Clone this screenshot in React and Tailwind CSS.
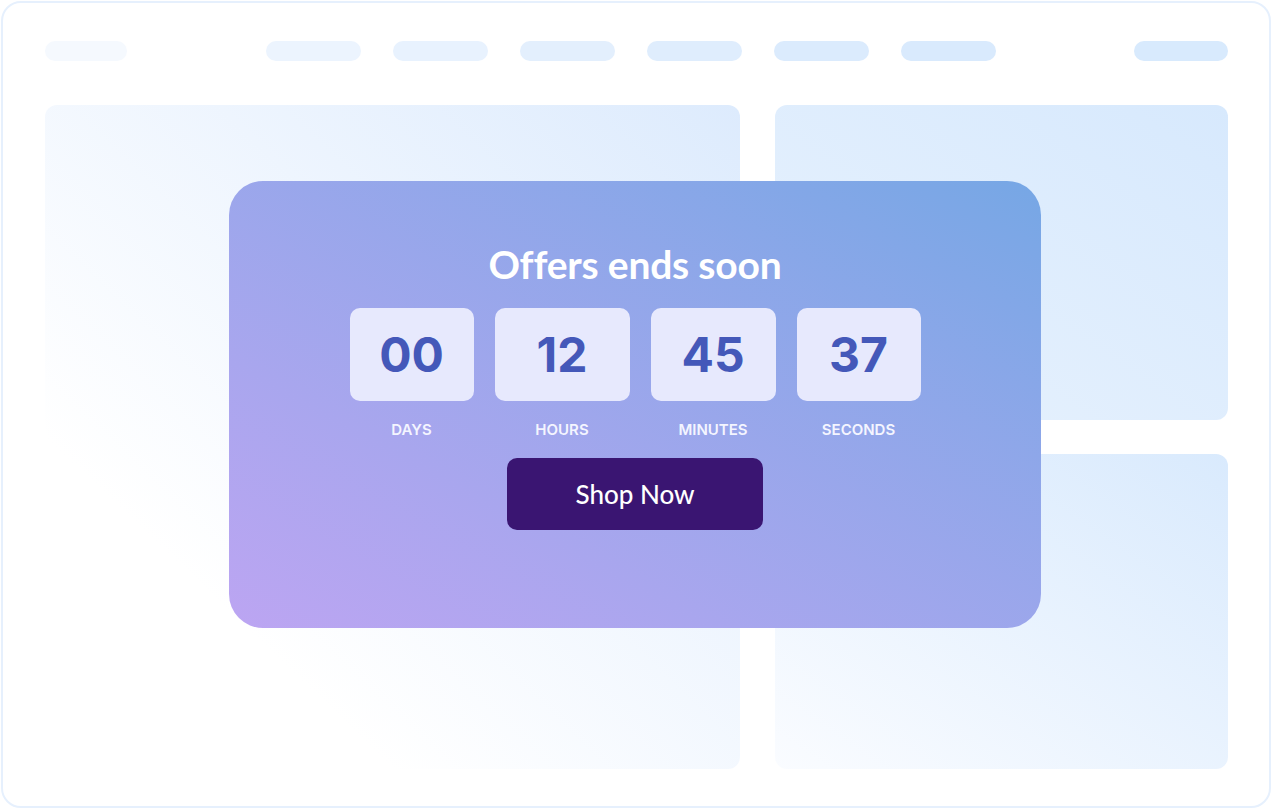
import React from "react";

const units = [
  { value: "00", label: "DAYS", w: "w-[124px]" },
  { value: "12", label: "HOURS", w: "w-[135px]" },
  { value: "45", label: "MINUTES", w: "w-[125px]" },
  { value: "37", label: "SECONDS", w: "w-[124px]" },
];

const App = () => {
  return (
    <div className="w-[1272px] h-[809px] bg-white p-[1px]">
      <div className="relative w-full h-full rounded-[20px] border-2 border-[#e6f0fd] bg-white pl-[42px] pr-[41px] pt-[38px]">
        {/* fake nav */}
        <div className="flex items-center h-[20px]">
          <div className="w-[82px] h-[20px] rounded-full bg-[#f5f9fe]" />
          <div className="flex gap-[32px] ml-[139px]">
            <div className="w-[95px] h-[20px] rounded-full bg-[#ecf4fe]" />
            <div className="w-[95px] h-[20px] rounded-full bg-[#e8f2fe]" />
            <div className="w-[95px] h-[20px] rounded-full bg-[#e3effd]" />
            <div className="w-[95px] h-[20px] rounded-full bg-[#dfedfd]" />
            <div className="w-[95px] h-[20px] rounded-full bg-[#dbebfd]" />
            <div className="w-[95px] h-[20px] rounded-full bg-[#d9eafd]" />
          </div>
          <div className="ml-auto w-[94px] h-[20px] rounded-full bg-[#d8eafd]" />
        </div>

        {/* fake content */}
        <div className="flex gap-[35px] mt-[44px]">
          <div className="w-[695px] h-[664px] rounded-[12px] bg-linear-to-tr from-white from-25% to-[#ddebfd]" />
          <div className="flex flex-col gap-[34px] w-[453px]">
            <div className="h-[315px] rounded-[12px] bg-linear-to-tr from-[#e8f2fd] to-[#d7e9fd]" />
            <div className="h-[315px] rounded-[12px] bg-linear-to-tr from-[#fafcff] to-[#d9eafd]" />
          </div>
        </div>

        {/* offer card */}
        <div className="absolute left-[226px] top-[178px] w-[812px] h-[447px] rounded-[34px] bg-linear-to-tr from-[#bca5f2] to-[#76a7e5] flex flex-col items-center pt-[59px]">
          <h1
            className="text-white font-bold text-[39px] leading-[48px] tracking-[-0.2px]"
            style={{ fontFamily: "Lato, 'Noto Sans', sans-serif" }}
          >
            Offers ends soon
          </h1>
          <div
            className="flex gap-[21px] mt-[20px]"
            style={{ fontFamily: "Inter, 'Noto Sans', sans-serif" }}
          >
            {units.map((u) => (
              <div key={u.label} className={`flex flex-col items-center ${u.w}`}>
                <div className="w-full h-[93px] rounded-[10px] bg-[#e7e9fd] flex items-center justify-center">
                  <span className="text-[#4458b9] font-bold text-[48px] leading-none">
                    {u.value}
                  </span>
                </div>
                <span className="mt-[20px] text-[#f4f5ff] font-semibold text-[15px] leading-[18px]">
                  {u.label}
                </span>
              </div>
            ))}
          </div>
          <button
            className="mt-[19px] w-[256px] h-[72px] rounded-[10px] bg-[#3a1572] text-white text-[26px] font-medium"
            style={{ fontFamily: "Lato, 'Noto Sans', sans-serif" }}
          >
            Shop Now
          </button>
        </div>
      </div>
    </div>
  );
};

export default App;
